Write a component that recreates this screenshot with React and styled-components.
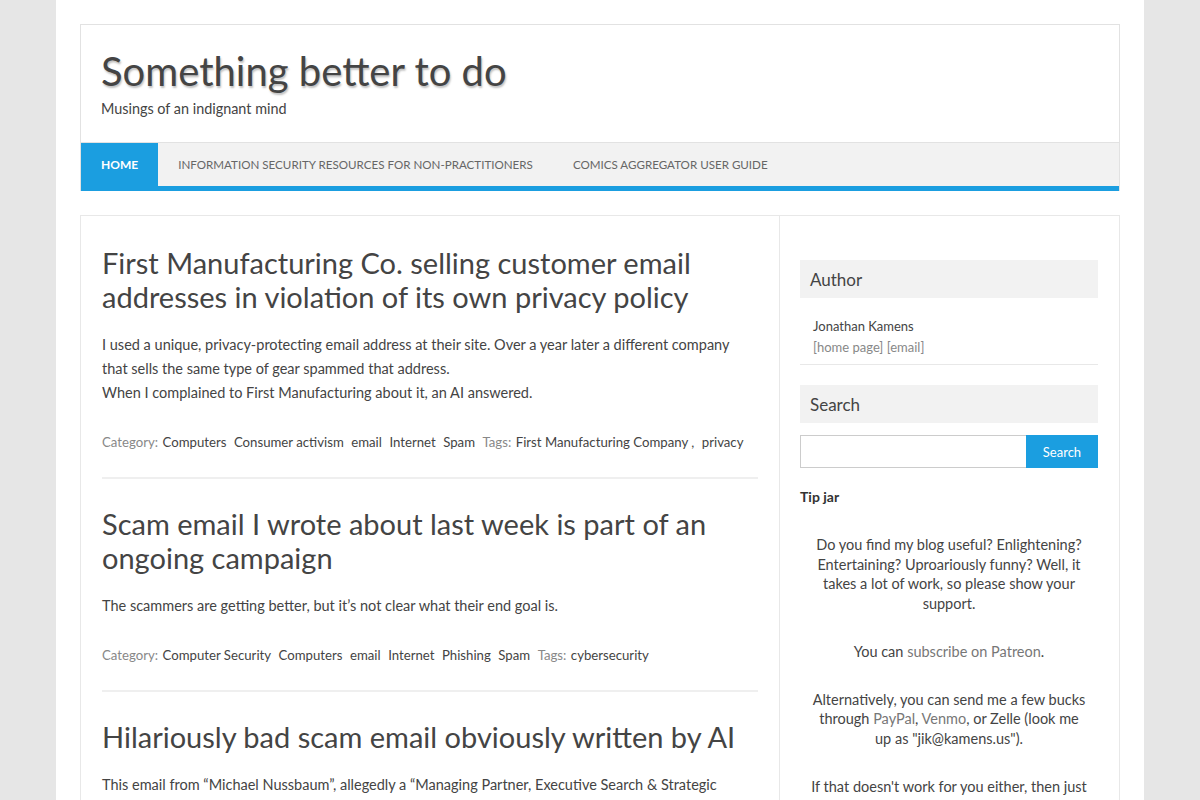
import React from 'react';
import styled, { createGlobalStyle } from 'styled-components';

const GlobalStyle = createGlobalStyle`
  body {
    margin: 0;
    background: #e6e6e6;
    font-family: Lato, "Open Sans", sans-serif;
    color: #444;
  }
`;

const posts = [
  {
    title: 'First Manufacturing Co. selling customer email addresses in violation of its own privacy policy',
    body: [
      'I used a unique, privacy-protecting email address at their site. Over a year later a different company that sells the same type of gear spammed that address.',
      'When I complained to First Manufacturing about it, an AI answered.',
    ],
    cats: ['Computers', 'Consumer activism', 'email', 'Internet', 'Spam'],
    tags: ['First Manufacturing Company', 'privacy'],
  },
  {
    title: 'Scam email I wrote about last week is part of an ongoing campaign',
    body: ['The scammers are getting better, but it’s not clear what their end goal is.'],
    cats: ['Computer Security', 'Computers', 'email', 'Internet', 'Phishing', 'Spam'],
    tags: ['cybersecurity'],
  },
  {
    title: 'Hilariously bad scam email obviously written by AI',
    body: ['This email from “Michael Nussbaum”, allegedly a “Managing Partner, Executive Search & Strategic'],
    cats: [],
    tags: [],
  },
];

const nav = ['Home', 'Information Security Resources for Non-Practitioners', 'Comics Aggregator User Guide'];

const App = () => {
  return (
    <>
      <GlobalStyle />
      <Page>
        <Header>
          <Branding>
            <SiteTitle>Something better to do</SiteTitle>
            <Tagline>Musings of an indignant mind</Tagline>
          </Branding>
          <Nav>
            {nav.map((item, i) => (
              <NavItem key={item} $active={i === 0}>
                {item}
              </NavItem>
            ))}
          </Nav>
        </Header>

        <Main>
          <Content>
            {posts.map((p) => (
              <Post key={p.title}>
                <PostTitle>{p.title}</PostTitle>
                <Excerpt>
                  {p.body.map((line) => (
                    <div key={line}>{line}</div>
                  ))}
                </Excerpt>
                {p.cats.length > 0 && (
                  <Meta>
                    <MetaLabel>Category:</MetaLabel>
                    {p.cats.map((c) => (
                      <MetaLink key={c}>{c}</MetaLink>
                    ))}
                    <MetaLabel>Tags:</MetaLabel>
                    {p.tags.map((t, i) => (
                      <MetaLink key={t}>
                        {t}
                        {i < p.tags.length - 1 ? ' ,' : ''}
                      </MetaLink>
                    ))}
                  </Meta>
                )}
              </Post>
            ))}
          </Content>

          <Sidebar>
            <Widget>
              <WidgetTitle>Author</WidgetTitle>
              <AuthorBox>
                <div>Jonathan Kamens</div>
                <AuthorLinks>[home page] [email]</AuthorLinks>
              </AuthorBox>
            </Widget>

            <Widget>
              <WidgetTitle>Search</WidgetTitle>
              <SearchForm>
                <SearchInput type="text" />
                <SearchButton>Search</SearchButton>
              </SearchForm>
            </Widget>

            <Widget>
              <TipTitle>Tip jar</TipTitle>
              <TipText>
                Do you find my blog useful? Enlightening? Entertaining? Uproariously funny? Well, it takes a lot of
                work, so please show your support.
              </TipText>
              <TipText>
                You can <SoftLink>subscribe on Patreon</SoftLink>.
              </TipText>
              <TipText>
                Alternatively, you can send me a few bucks through <SoftLink>PayPal</SoftLink>,{' '}
                <SoftLink>Venmo</SoftLink>, or Zelle (look me up as "jik@kamens.us").
              </TipText>
              <TipText>If that doesn't work for you either, then just</TipText>
            </Widget>
          </Sidebar>
        </Main>
      </Page>
    </>
  );
};

const Page = styled.div`
  width: 1088px;
  margin: 0 auto;
  background: #fff;
  padding: 24px 24px 40px;
  box-sizing: border-box;
  min-height: 800px;
`;

const Header = styled.header`
  border: 1px solid #e2e2e2;
  border-bottom: none;
`;

const Branding = styled.div`
  padding: 22px 20px 24px;
  height: 117px;
  box-sizing: border-box;
`;

const SiteTitle = styled.h1`
  margin: 0;
  font-size: 40px;
  font-weight: 400;
  color: #444;
  line-height: 48px;
  text-shadow: 1px 2px 2px rgba(0, 0, 0, 0.25);
`;

const Tagline = styled.p`
  margin: 5px 0 0;
  font-size: 14.4px;
  color: #444;
`;

const Nav = styled.nav`
  display: flex;
  background: #f2f2f2;
  border-top: 1px solid #e2e2e2;
  border-bottom: 5px solid #1b9ee0;
  height: 43px;
`;

const NavItem = styled.a`
  display: flex;
  align-items: center;
  padding: 0 20px;
  font-size: ${(p) => (p.$active ? '12px' : '11.6px')};
  text-transform: uppercase;
  color: ${(p) => (p.$active ? '#fff' : '#666')};
  font-weight: ${(p) => (p.$active ? 700 : 400)};
  background: ${(p) => (p.$active ? '#1b9ee0' : 'transparent')};
`;

const Main = styled.div`
  display: grid;
  grid-template-columns: 699px 1fr;
  margin-top: 24px;
  border: 1px solid #e8e8e8;
`;

const Content = styled.main`
  border-right: 1px solid #e8e8e8;
  padding: 30px 21px 0;
`;

const Post = styled.article`
  padding-bottom: 25px;
  margin-bottom: 28px;
  border-bottom: 2px solid #efefef;

  &:last-child {
    border-bottom: none;
  }
`;

const PostTitle = styled.h2`
  margin: 0;
  font-size: 29px;
  font-weight: 400;
  line-height: 34px;
  color: #444;
`;

const Excerpt = styled.div`
  margin-top: 19px;
  font-size: 14.5px;
  line-height: 24px;
  color: #444;
`;

const Meta = styled.div`
  margin-top: 27px;
  display: flex;
  flex-wrap: wrap;
  gap: 7.5px;
  font-size: 13.2px;
  line-height: 20px;
`;

const MetaLabel = styled.span`
  color: #888;
  margin-right: -3px;
`;

const MetaLink = styled.a`
  color: #444;
`;

const Sidebar = styled.aside`
  padding: 44px 21px 0 20px;
`;

const Widget = styled.section`
  margin-bottom: 20px;
`;

const WidgetTitle = styled.h3`
  margin: 0;
  background: #f2f2f2;
  height: 38px;
  display: flex;
  align-items: center;
  padding: 0 10px;
  font-size: 17px;
  font-weight: 400;
  color: #444;
`;

const AuthorBox = styled.div`
  padding: 18px 13px 6px;
  font-size: 13px;
  line-height: 21px;
  color: #444;
  border-bottom: 1px solid #e8e8e8;
`;

const AuthorLinks = styled.div`
  color: #888;
  font-size: 13px;
`;

const SearchForm = styled.form`
  display: flex;
  margin-top: 12px;
`;

const SearchInput = styled.input`
  flex: 1;
  height: 33px;
  box-sizing: border-box;
  border: 1px solid #ccc;
  border-right: none;
  outline: none;
  min-width: 0;
`;

const SearchButton = styled.button`
  width: 72px;
  height: 33px;
  border: none;
  background: #1b9ee0;
  color: #fff;
  font-family: inherit;
  font-size: 13px;
`;

const TipTitle = styled.h4`
  margin: 0 0 30px;
  font-size: 14px;
  font-weight: 700;
  color: #333;
`;

const TipText = styled.p`
  margin: 0 10px 28px;
  text-align: center;
  font-size: 14.5px;
  line-height: 19.7px;
  color: #444;
`;

const SoftLink = styled.a`
  color: #777;
`;

export default App;
